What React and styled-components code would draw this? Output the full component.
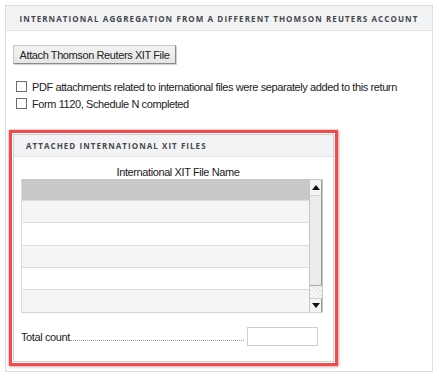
import React from 'react';
import styled, { createGlobalStyle } from 'styled-components';

const GlobalStyle = createGlobalStyle`
  html, body {
    margin: 0;
    padding: 0;
    background: #fff;
  }
  body {
    font-family: "Liberation Sans", Arial, sans-serif;
    font-size: 11px;
    letter-spacing: -0.4px;
    color: #222;
  }
`;

const Page = styled.div`
  width: 439px;
  height: 377px;
  padding: 5px 0 0 5px;
  box-sizing: border-box;
`;

const Panel = styled.section`
  width: 428px;
  border: 1px solid #dcdde0;
  box-sizing: border-box;
  background: #fff;
`;

const PanelHeader = styled.div`
  height: ${(p) => (p.left ? '21px' : '24px')};
  background: #f2f3f5;
  border-bottom: 1px solid #e2e3e6;
  display: flex;
  align-items: center;
  justify-content: ${(p) => (p.left ? 'flex-start' : 'center')};
  padding-left: ${(p) => (p.left ? '12px' : '0')};
  font-family: "Open Sans", sans-serif;
  font-weight: 700;
  font-size: 8px;
  letter-spacing: ${(p) => (p.left ? '1.05px' : '1.1px')};
  color: #45484d;
  text-transform: uppercase;
  white-space: nowrap;
`;

const PanelBody = styled.div`
  padding: 14px 0 5px 3px;
`;

const AttachButton = styled.button`
  display: block;
  margin-left: 4px;
  height: 19px;
  width: 163px;
  padding: 0;
  font-family: "Liberation Sans", Arial, sans-serif;
  font-size: 11px;
  letter-spacing: -0.4px;
  color: #222;
  white-space: nowrap;
  background: linear-gradient(#f2f2f2, #e6e6e6);
  border: 1px solid #c9c9c9;
  border-right-color: #8a8a8a;
  border-bottom-color: #8a8a8a;
  box-shadow: 1px 1px 0 #d2d2d2;
`;

const CheckList = styled.div`
  margin: 17px 0 0 7px;
  display: flex;
  flex-direction: column;
  gap: 6px;
`;

const CheckRow = styled.label`
  display: flex;
  align-items: center;
  gap: 5px;
  height: 11px;
  color: #222;
  white-space: nowrap;
`;

const Box = styled.span`
  width: 9px;
  height: 9px;
  border: 1px solid #6d6d6d;
  background: #fff;
  flex: none;
`;

const Highlight = styled.div`
  margin-top: 21px;
  width: 329px;
  border: 3px solid #f04a4a;
  box-shadow: 0 0 2px rgba(240, 74, 74, 0.6), 1px 1px 3px rgba(0, 0, 0, 0.2);
  padding: 1px;
  box-sizing: border-box;
`;

const InnerPanel = styled.div`
  border: 1px solid #cfd1d4;
  background: #fff;
`;

const InnerBody = styled.div`
  padding: 8px 10px 15px 7px;
`;

const ColumnTitle = styled.div`
  text-align: center;
  padding-left: 12px;
  color: #222;
  line-height: 14px;
`;

const Grid = styled.div`
  display: flex;
  width: 302px;
  height: 134px;
  border-bottom: 1px solid #d6d6d6;
  box-sizing: border-box;
`;

const Rows = styled.div`
  flex: 1;
  display: flex;
  flex-direction: column;
  border-left: 1px solid #dadada;
`;

const Row = styled.div`
  flex: 1;
  background: ${(p) => (p.selected ? '#c9c9c9' : p.alt ? '#f5f5f5' : '#fff')};
  border-bottom: 1px solid ${(p) => (p.last ? 'transparent' : '#dcdcdc')};
`;

const Scrollbar = styled.div`
  width: 14px;
  display: flex;
  flex-direction: column;
  background: #efefef;
  border: 1px solid #c6c6c6;
  border-bottom: none;
  box-sizing: border-box;
`;

const ArrowButton = styled.div`
  height: ${(p) => p.h}px;
  display: flex;
  align-items: center;
  justify-content: center;
  background: #f4f4f4;
  border-bottom: ${(p) => (p.top ? '1px solid #cfcfcf' : 'none')};
  border-top: ${(p) => (p.top ? 'none' : '1px solid #cfcfcf')};
  border-right: 1px solid #9a9a9a;
`;

const Thumb = styled.div`
  height: 89px;
  background: #ececec;
  border-right: 1px solid #9a9a9a;
  border-bottom: 1px solid #a8a8a8;
`;

const Track = styled.div`
  flex: 1;
  background-color: #f6f6f6;
  background-image: repeating-linear-gradient(45deg, #e8e8e8 0 1px, transparent 1px 3px);
`;

const CountRow = styled.div`
  display: flex;
  align-items: center;
  margin-top: 14px;
  height: 19px;
`;

const CountLabel = styled.span`
  color: #222;
  white-space: nowrap;
  flex: none;
`;

const Leader = styled.span`
  flex: 1;
  height: 0;
  margin-top: 8px;
  border-bottom: 1px dotted #9a9a9a;
  margin-right: 3px;
`;

const CountInput = styled.div`
  flex: none;
  width: 71px;
  height: 19px;
  margin-right: 5px;
  border: 1px solid #cfcfcf;
  box-sizing: border-box;
  background: #fff;
`;

const Arrow = ({ up }) => (
  <svg width="8" height="5" viewBox="0 0 8 5">
    <polygon points={up ? '0,5 8,5 4,0' : '0,0 8,0 4,5'} fill="#111" />
  </svg>
);

const rows = [
  { selected: true },
  { alt: true },
  {},
  { alt: true },
  {},
  { alt: true, last: true },
];

export default function App() {
  return (
    <Page>
      <GlobalStyle />
      <Panel>
        <PanelHeader>International Aggregation from a Different Thomson Reuters Account</PanelHeader>
        <PanelBody>
          <AttachButton>Attach Thomson Reuters XIT File</AttachButton>
          <CheckList>
            <CheckRow>
              <Box />
              PDF attachments related to international files were separately added to this return
            </CheckRow>
            <CheckRow>
              <Box />
              Form 1120, Schedule N completed
            </CheckRow>
          </CheckList>
          <Highlight>
            <InnerPanel>
              <PanelHeader left>Attached International XIT Files</PanelHeader>
              <InnerBody>
                <ColumnTitle>International XIT File Name</ColumnTitle>
                <Grid>
                  <Rows>
                    {rows.map((r, i) => (
                      <Row key={i} selected={r.selected} alt={r.alt} last={r.last} />
                    ))}
                  </Rows>
                  <Scrollbar>
                    <ArrowButton top h={15}>
                      <Arrow up />
                    </ArrowButton>
                    <Thumb />
                    <Track />
                    <ArrowButton h={13}>
                      <Arrow />
                    </ArrowButton>
                  </Scrollbar>
                </Grid>
                <CountRow>
                  <CountLabel>Total count</CountLabel>
                  <Leader />
                  <CountInput />
                </CountRow>
              </InnerBody>
            </InnerPanel>
          </Highlight>
        </PanelBody>
      </Panel>
    </Page>
  );
}
